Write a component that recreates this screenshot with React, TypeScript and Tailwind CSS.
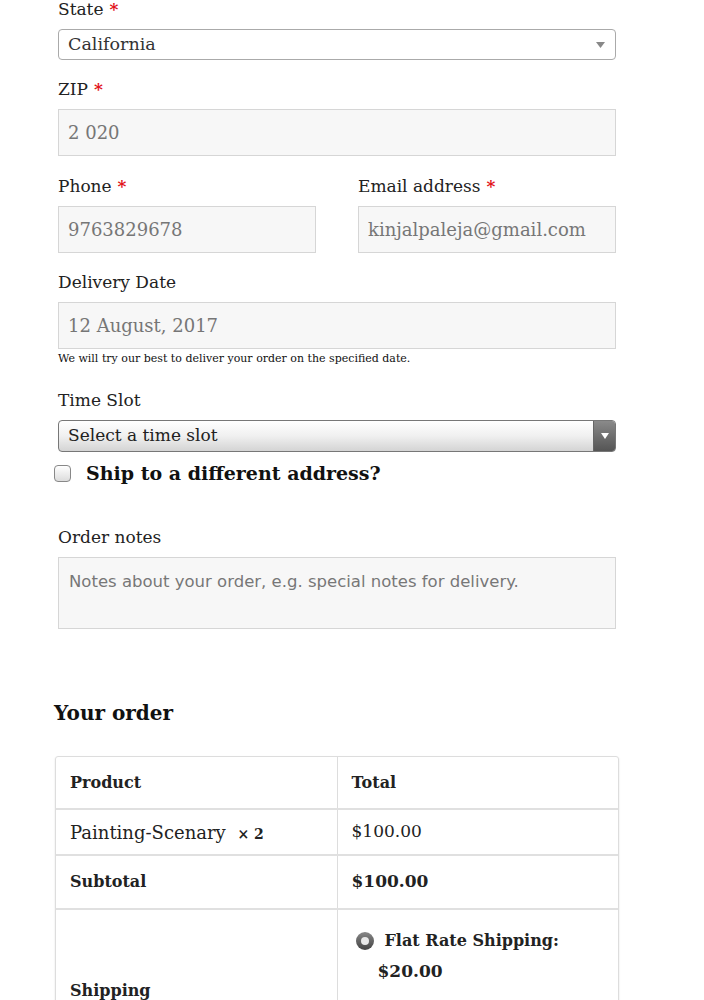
import React from 'react';

const serif = "font-['DejaVu_Serif',Georgia,serif]";

function Req() {
  return <span className="text-[#e2141b] font-bold"> *</span>;
}

function Label({ children }: { children: React.ReactNode }) {
  return <label className="block text-[17px] leading-[26px] text-[#222] mb-[7px]">{children}</label>;
}

function TextBox({ value }: { value: string }) {
  return (
    <div className="h-[47px] w-full border border-[#d6d6d6] bg-[#f7f7f7] px-[9px] flex items-center text-[18px] text-[#767676]">
      {value}
    </div>
  );
}

export default function App() {
  return (
    <div className={`${serif} bg-white min-h-[1000px] text-[#222] overflow-hidden`}>
      <div className="ml-[58px] w-[558px] -mt-[4px]">
        <Label>
          State<Req />
        </Label>
        <div className="h-[31px] w-full rounded-[4px] border border-[#aaa] bg-white flex items-center justify-between pl-[9px] pr-[10px]">
          <span className="text-[17.5px] text-[#333]">California</span>
          <svg width="9" height="6" viewBox="0 0 9 6">
            <path d="M0 0h9L4.5 6z" fill="#888" />
          </svg>
        </div>

        <div className="mt-[16px]">
          <Label>
            ZIP<Req />
          </Label>
          <TextBox value="2 020" />
        </div>

        <div className="mt-[17px] grid grid-cols-2 gap-[42px]">
          <div>
            <Label>
              Phone<Req />
            </Label>
            <TextBox value="9763829678" />
          </div>
          <div>
            <Label>
              Email address<Req />
            </Label>
            <TextBox value="kinjalpaleja@gmail.com" />
          </div>
        </div>

        <div className="mt-[16px]">
          <Label>Delivery Date</Label>
          <TextBox value="12 August, 2017" />
          <p className="mt-[3px] text-[11px] leading-[14px] text-[#111]">
            We will try our best to deliver your order on the specified date.
          </p>
        </div>

        <div className="mt-[21px]">
          <Label>Time Slot</Label>
          <div className="h-[32px] w-full rounded-[4px] border border-[#777] bg-gradient-to-b from-white via-[#f0f0f0] to-[#d4d4d4] flex items-stretch overflow-hidden">
            <span className="flex-1 flex items-center pl-[9px] text-[17px] text-[#222]">Select a time slot</span>
            <span className="w-[22px] bg-gradient-to-b from-[#8a8a8a] to-[#555] border-l border-[#666] flex items-center justify-center">
              <svg width="8" height="6" viewBox="0 0 8 6">
                <path d="M0 0h8L4 6z" fill="#fff" />
              </svg>
            </span>
          </div>
        </div>
      </div>

      <div className="ml-[54px] mt-[7px] flex items-center gap-[15px]">
        <span className="w-[17px] h-[17px] rounded-[4px] border border-[#888] bg-gradient-to-b from-white to-[#dcdcdc]" />
        <span className="text-[19px] leading-[28px] font-bold text-[#111]">Ship to a different address?</span>
      </div>

      <div className="ml-[58px] w-[558px] mt-[37px]">
        <Label>Order notes</Label>
        <div className="h-[72px] w-full border border-[#d6d6d6] bg-[#f7f7f7] px-[10px] pt-[12px] font-['DejaVu_Sans',sans-serif] text-[16.5px] text-[#777]">
          Notes about your order, e.g. special notes for delivery.
        </div>
      </div>

      <h3 className="ml-[54px] mt-[69px] text-[20px] leading-[30px] font-bold text-[#111]">Your order</h3>

      <div className="ml-[55px] w-[564px] mt-[28px] border border-[#ddd] rounded-[3px] shadow-[0_1px_2px_rgba(0,0,0,0.12)]">
        <table className="w-full border-collapse text-[17px]">
          <tbody>
            <tr className="border-b-2 border-[#e0e0e0]">
              <th className="w-[281px] h-[52px] text-left font-bold text-[16px] px-[14px] border-r border-[#ddd]">Product</th>
              <th className="text-left font-bold text-[16px] px-[14px]">Total</th>
            </tr>
            <tr className="border-b-2 border-[#e0e0e0]">
              <td className="h-[46px] px-[14px] border-r border-[#ddd] text-[18px]">
                Painting-Scenary <span className="ml-[6px] font-bold text-[14px]">× 2</span>
              </td>
              <td className="px-[14px]">$100.00</td>
            </tr>
            <tr className="border-b-2 border-[#e0e0e0]">
              <th className="h-[54px] text-left font-bold text-[16px] px-[14px] border-r border-[#ddd]">Subtotal</th>
              <td className="px-[14px] font-bold">$100.00</td>
            </tr>
            <tr>
              <th className="h-[162px] text-left font-bold text-[16px] px-[14px] border-r border-[#ddd] align-middle">Shipping</th>
              <td className="align-top pt-[16px] pl-[18px] pr-[14px] text-[16px]">
                <div className="flex items-center gap-[11px] font-bold">
                  <span className="w-[18px] h-[18px] rounded-full bg-gradient-to-b from-[#888] to-[#444] flex items-center justify-center">
                    <span className="w-[8px] h-[8px] rounded-full bg-[#e8e8e8]" />
                  </span>
                  <span className="leading-[30px]">Flat Rate Shipping:</span>
                </div>
                <div className="pl-[22px] font-bold leading-[30px] text-[17px]">$20.00</div>
              </td>
            </tr>
          </tbody>
        </table>
      </div>
    </div>
  );
}
